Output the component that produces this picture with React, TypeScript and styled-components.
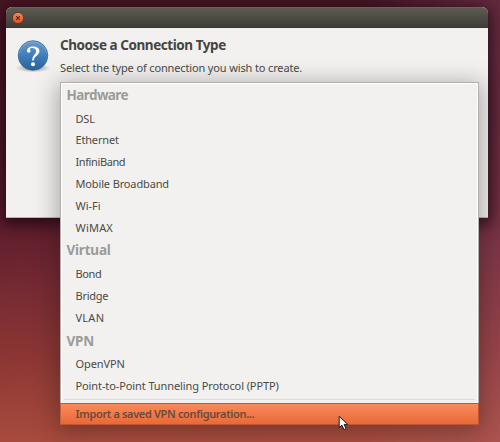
import React from "react";
import styled, { createGlobalStyle } from "styled-components";

const Global = createGlobalStyle`
  * { box-sizing: border-box; }
  html, body { margin: 0; padding: 0; }
  body { overflow: hidden; font-family: "Noto Sans", "Open Sans", sans-serif; color: #4a4a47; }
`;

const Desktop = styled.main`
  position: relative;
  width: 500px;
  height: 442px;
  overflow: hidden;
  padding: 7px 12px 0 6px;
  background:
    linear-gradient(90deg, rgba(170, 100, 130, 0) 72%, rgba(170, 100, 130, 0.27) 100%),
    linear-gradient(178deg, #461422 0%, #4b1726 30%, #5b1c2b 48%, #742933 62%, #8c3634 78%, #a84b3c 96%, #ac4d3e 100%);
`;

const Dialog = styled.section`
  height: 211px;
  border-radius: 6px 6px 0 0;
  background: #f2f1f0;
  border-bottom: 1px solid #b9b6b4;
  box-shadow: 0 4px 14px 3px rgba(22, 0, 14, 0.65);
`;

const TitleBar = styled.header`
  display: flex;
  align-items: center;
  height: 21px;
  padding: 0 6px;
  border-radius: 6px 6px 0 0;
  background: linear-gradient(#5c5a50, #3f3e39);
  border-top: 1px solid #66645b;
  border-bottom: 1px solid #373632;
`;

const CloseButton = styled.button`
  display: flex;
  width: 12px;
  height: 12px;
  padding: 0;
  border: 0;
  background: none;
`;

const Body = styled.div`
  display: flex;
  gap: 9px;
  padding: 11px 9px 0;
`;

const IconBox = styled.div`
  width: 36px;
  height: 36px;
  svg { display: block; }
`;

const Heading = styled.h1`
  margin: -3px 0 0;
  font-size: 13.5px;
  line-height: 19px;
  font-weight: 700;
  letter-spacing: -0.44px;
  color: #454542;
  white-space: nowrap;
`;

const Message = styled.p`
  margin: 4px 0 0;
  font-size: 11px;
  line-height: 17px;
  letter-spacing: -0.14px;
  white-space: nowrap;
`;

const Menu = styled.div`
  position: absolute;
  left: 60px;
  top: 82px;
  width: 419px;
  height: 343px;
  display: flex;
  flex-direction: column;
  background: #f2f1f0;
  border: 1px solid #b3aeab;
  border-bottom: 0;
  box-shadow: inset 1px 1px #fff, inset -1px 0 #fff, 0 4px 22px 2px rgba(30, 22, 20, 0.36);
`;

const GroupLabel = styled.div<{ $spacing: number }>`
  height: 24.7px;
  padding-left: 5.5px;
  font-size: 13.5px;
  line-height: 24.5px;
  font-weight: 700;
  letter-spacing: ${(p) => p.$spacing}px;
  color: #9b9b9a;
`;

const Item = styled.div<{ $spacing: number }>`
  height: 21.8px;
  padding-left: 14.5px;
  font-size: 11px;
  line-height: 21.8px;
  letter-spacing: ${(p) => p.$spacing}px;
  white-space: nowrap;
`;

const Separator = styled.div`
  height: 1px;
  margin: 2px 3px 0;
  background: #dedbd9;
`;

const ActiveItem = styled.div`
  height: 22px;
  margin: auto -1px 0;
  padding-left: 15.5px;
  font-size: 11px;
  line-height: 20px;
  font-weight: 600;
  letter-spacing: -0.35px;
  color: #6c4a38;
  background: linear-gradient(#fa8a5a, #e8693a);
  border: 1px solid #c05530;
  border-width: 1px 1px 1px 0;
  box-shadow: inset 1px 0 #cc6039;
`;

const Pointer = styled.svg`
  position: absolute;
  left: 338px;
  top: 415px;
`;

type Entry = { text: string; spacing: number };
const groups: { title: Entry; items: Entry[] }[] = [
  {
    title: { text: "Hardware", spacing: -0.58 },
    items: [
      { text: "DSL", spacing: -0.2 },
      { text: "Ethernet", spacing: -0.17 },
      { text: "InfiniBand", spacing: -0.4 },
      { text: "Mobile Broadband", spacing: -0.14 },
      { text: "Wi-Fi", spacing: 0 },
      { text: "WiMAX", spacing: 0.2 },
    ],
  },
  {
    title: { text: "Virtual", spacing: -0.22 },
    items: [
      { text: "Bond", spacing: -0.4 },
      { text: "Bridge", spacing: -0.25 },
      { text: "VLAN", spacing: 0.25 },
    ],
  },
  {
    title: { text: "VPN", spacing: -0.25 },
    items: [
      { text: "OpenVPN", spacing: -0.1 },
      { text: "Point-to-Point Tunneling Protocol (PPTP)", spacing: -0.1 },
    ],
  },
];

const CloseIcon = () => (
  <svg width="12" height="12" viewBox="0 0 12 12">
    <defs>
      <linearGradient id="close" x2="0" y2="1">
        <stop stopColor="#f98a62" />
        <stop offset="1" stopColor="#e84e1c" />
      </linearGradient>
    </defs>
    <circle cx="6" cy="6" r="5.6" fill="url(#close)" stroke="#3b3530" strokeWidth="0.7" />
    <path d="M4.1 4.1 7.9 7.9M7.9 4.1 4.1 7.9" stroke="#54281a" strokeWidth="1.1" />
  </svg>
);

const QuestionIcon = () => (
  <svg width="36" height="36" viewBox="0 0 36 36">
    <defs>
      <linearGradient id="ball" x2="0" y2="1">
        <stop stopColor="#6c9ccb" />
        <stop offset="0.45" stopColor="#4381bd" />
        <stop offset="1" stopColor="#286396" />
      </linearGradient>
      <radialGradient id="ground">
        <stop offset="0.5" stopColor="#000" stopOpacity="0.22" />
        <stop offset="1" stopColor="#000" stopOpacity="0" />
      </radialGradient>
    </defs>
    <ellipse cx="18" cy="29" rx="17.5" ry="4.5" fill="url(#ground)" />
    <circle cx="18" cy="16.5" r="14.8" fill="url(#ball)" stroke="#356a9c" strokeWidth="0.8" />
    <path d="M4.2 14.5A14 14 0 0 1 31.8 14.5" fill="none" stroke="#a5c4e1" strokeOpacity="0.5" strokeWidth="0.8" />
    <path
      d="M12 12.6C11 6.2 24.6 5.6 24.4 12.2C24.3 16.6 19.2 16.6 18.9 21.4H17.2C17.1 16.2 21.2 15.6 21.1 12C21 8.6 15.6 8.2 14.6 10.4C16.2 11.2 15.6 13.6 13.8 13.6C12.7 13.6 12.1 13 12 12.6Z"
      fill="#fff"
    />
    <circle cx="18" cy="25.2" r="2" fill="#fff" />
  </svg>
);

export default function App() {
  return (
    <>
      <Global />
      <Desktop>
        <Dialog>
          <TitleBar>
            <CloseButton aria-label="Close"><CloseIcon /></CloseButton>
          </TitleBar>
          <Body>
            <IconBox><QuestionIcon /></IconBox>
            <div>
              <Heading>Choose a Connection Type</Heading>
              <Message>Select the type of connection you wish to create.</Message>
            </div>
          </Body>
        </Dialog>
        <Menu>
          {groups.map((g) => (
            <React.Fragment key={g.title.text}>
              <GroupLabel $spacing={g.title.spacing}>{g.title.text}</GroupLabel>
              {g.items.map((i) => (
                <Item key={i.text} $spacing={i.spacing}>{i.text}</Item>
              ))}
            </React.Fragment>
          ))}
          <Separator />
          <ActiveItem>Import a saved VPN configuration...</ActiveItem>
        </Menu>
        <Pointer width="12" height="16" viewBox="0 0 12 16">
          <path d="M1.2 1.2V12.6L3.9 10.2 6 14.6 8 13.6 6.1 9.4H9.7Z" fill="#fff" stroke="#241d1c" strokeWidth="1" />
        </Pointer>
      </Desktop>
    </>
  );
}
